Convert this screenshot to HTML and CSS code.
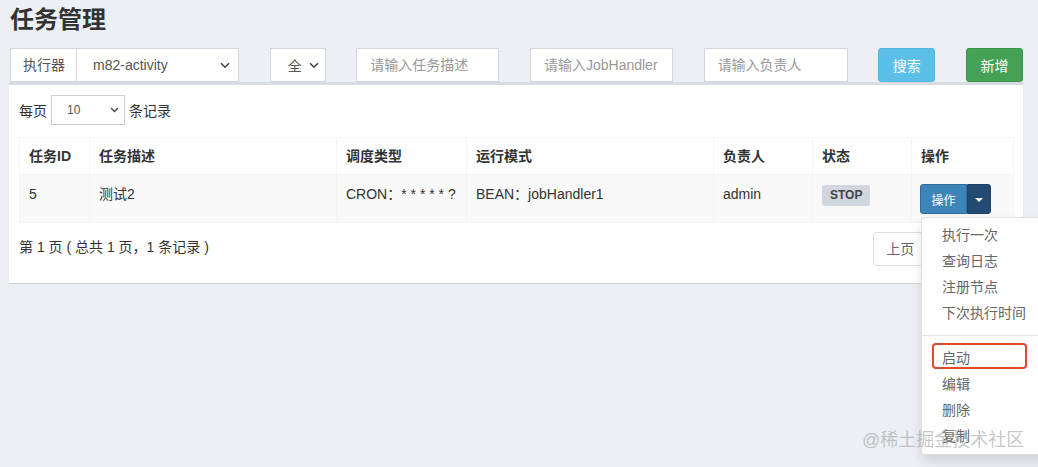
FILE: index.html
```html
<!DOCTYPE html>
<html lang="zh-CN">
<head>
  <meta charset="UTF-8">
  <meta name="viewport" content="width=device-width, initial-scale=1">
  <title>任务管理</title>
  <link rel="stylesheet" href="styles.css">
</head>
<body>
  <div class="content">
    <h1 class="page-title">任务管理</h1>

    <div class="filters">
      <div class="input-group">
        <span class="addon">执行器</span>
        <div class="fake-select sel-group">
          <span>m82-activity</span>
          <svg class="chev" width="10" height="7" viewBox="0 0 10 7"><path d="M1 1.2 L5 5.2 L9 1.2" fill="none" stroke="#444" stroke-width="1.6"/></svg>
        </div>
      </div>
      <div class="fake-select sel-status">
        <span>全</span>
        <svg class="chev" width="10" height="7" viewBox="0 0 10 7"><path d="M1 1.2 L5 5.2 L9 1.2" fill="none" stroke="#444" stroke-width="1.6"/></svg>
      </div>
      <input class="text-input" type="text" placeholder="请输入任务描述">
      <input class="text-input" type="text" placeholder="请输入JobHandler">
      <input class="text-input wide" type="text" placeholder="请输入负责人">
      <button class="btn btn-info">搜索</button>
      <button class="btn btn-success">新增</button>
    </div>

    <div class="box">
      <div class="length-row">
        <span>每页</span>
        <div class="fake-select sel-len">
          <span>10</span>
          <svg class="chev" width="9" height="6" viewBox="0 0 10 7"><path d="M1 1.2 L5 5.2 L9 1.2" fill="none" stroke="#444" stroke-width="1.6"/></svg>
        </div>
        <span>条记录</span>
      </div>

      <table class="job-table">
        <thead>
          <tr>
            <th class="col-id">任务ID</th>
            <th class="col-desc">任务描述</th>
            <th class="col-type">调度类型</th>
            <th class="col-mode">运行模式</th>
            <th class="col-owner">负责人</th>
            <th class="col-status">状态</th>
            <th class="col-op">操作</th>
          </tr>
        </thead>
        <tbody>
          <tr>
            <td>5</td>
            <td>测试2</td>
            <td>CRON：* * * * * ?</td>
            <td>BEAN：jobHandler1</td>
            <td>admin</td>
            <td><span class="label">STOP</span></td>
            <td>
              <div class="btn-group">
                <button class="btn-op">操作</button><button class="btn-caret"><span class="caret"></span></button>
                <ul class="dropdown-menu">
                  <li><a>执行一次</a></li>
                  <li><a>查询日志</a></li>
                  <li><a>注册节点</a></li>
                  <li><a>下次执行时间</a></li>
                  <li class="divider"></li>
                  <li class="marked"><a>启动</a><span class="mark"></span></li>
                  <li><a>编辑</a></li>
                  <li><a>删除</a></li>
                  <li><a>复制</a></li>
                </ul>
              </div>
            </td>
          </tr>
        </tbody>
      </table>

      <div class="footer-row">
        <div class="info">第 1 页 ( 总共 1 页，1 条记录 )</div>
        <ul class="pagination">
          <li><a>上页</a></li>
          <li><a>1</a></li>
          <li><a>下页</a></li>
        </ul>
      </div>
    </div>
  </div>

  <div class="watermark">@稀土掘金技术社区</div>
</body>
</html>
```

FILE: styles.css
```css
html, body {
  margin: 0;
  height: 100%;
  overflow: hidden;
}
body {
  background-color: #ecf0f5;
  font-family: "Liberation Sans", "Noto Sans CJK SC", sans-serif;
  font-size: 14px;
  color: #333;
  position: relative;
}
.content {
  padding: 8px 15px 0 10px;
}
.page-title {
  margin: 0 0 16px;
  font-size: 24px;
  line-height: 24px;
  font-weight: bold;
  color: #333;
}

/* filter bar */
.filters {
  display: flex;
  justify-content: space-between;
  height: 34px;
}
.input-group {
  display: flex;
  width: 229px;
}
.addon {
  width: 66px;
  box-sizing: border-box;
  padding: 0 0 0 12px;
  line-height: 32px;
  white-space: nowrap;
  border: 1px solid #d2d6de;
  border-right: none;
  background-color: #fff;
  color: #555;
}
.fake-select {
  display: flex;
  align-items: center;
  justify-content: space-between;
  box-sizing: border-box;
  border: 1px solid #d2d6de;
  background-color: #fff;
  color: #555;
}
.sel-group {
  width: 163px;
  padding: 0 8px 0 16px;
}
.sel-status {
  width: 56px;
  padding: 0 6px 0 17px;
}
.sel-len {
  width: 74px;
  height: 30px;
  padding: 0 5px 0 15px;
  margin: 0 4px 0 4px;
  font-size: 12px;
  border-color: #ccc;
}
.text-input {
  width: 143px;
  height: 34px;
  box-sizing: border-box;
  padding: 0 13px;
  border: 1px solid #d2d6de;
  font-family: inherit;
  font-size: 14px;
  color: #555;
  outline: none;
}
.text-input.wide {
  width: 144px;
}
.text-input::placeholder {
  color: #999;
}
.btn {
  width: 57px;
  height: 34px;
  border: 1px solid transparent;
  border-radius: 3px;
  color: #fff;
  font-family: inherit;
  font-size: 14px;
  cursor: pointer;
}
.btn-info {
  background-color: #5bbfe8;
  border-color: #52b6df;
}
.btn-success {
  background-color: #44a155;
  border-color: #3b944c;
}

/* box */
.box {
  background-color: #fff;
  border-top: 3px solid #d9dde3;
  box-shadow: 0 1px 1px rgba(0, 0, 0, 0.1);
  padding: 10px 10px 17px 10px;
  margin-left: -1px;
}
.length-row {
  display: flex;
  align-items: center;
  height: 30px;
  margin-bottom: 12px;
}

/* table */
.job-table {
  width: 100%;
  table-layout: fixed;
  border-collapse: collapse;
  border: 1px solid #f4f4f4;
}
.job-table th,
.job-table td {
  box-sizing: border-box;
  border: 1px solid #f4f4f4;
  text-align: left;
  line-height: 20px;
}
.job-table th {
  padding: 8px 9px;
  font-weight: bold;
}
.job-table td {
  padding: 9px 9px 8px;
  vertical-align: top;
}
.job-table tbody tr {
  background-color: #f9f9f9;
}
.col-id { width: 70px; }
.col-desc { width: 247px; }
.col-type { width: 130px; }
.col-mode { width: 247px; }
.col-owner { width: 99px; }
.col-status { width: 99px; }
.col-op { width: 102px; }

.label {
  display: inline-block;
  padding: 0 8px;
  line-height: 21px;
  border-radius: 3px;
  background-color: #d2d6de;
  color: #444;
  font-size: 12px;
  font-weight: bold;
}

.btn-group {
  position: relative;
  display: flex;
  margin-left: -1px;
}
.btn-op,
.btn-caret {
  height: 30px;
  border: 1px solid #2f6e9c;
  color: #fff;
  font-family: inherit;
  font-size: 12px;
  padding: 0;
}
.btn-op {
  width: 47px;
  background-color: #3d84b9;
  border-radius: 3px 0 0 3px;
}
.btn-caret {
  width: 24px;
  background-color: #234a71;
  border-color: #1f4266;
  border-radius: 0 3px 3px 0;
}
.caret {
  display: inline-block;
  border-top: 4px solid #fff;
  border-left: 4px solid transparent;
  border-right: 4px solid transparent;
  vertical-align: middle;
}

/* dropdown */
.dropdown-menu {
  position: absolute;
  top: 33px;
  left: 1px;
  z-index: 10;
  min-width: 160px;
  margin: 0;
  padding: 4px 0 5px;
  list-style: none;
  background-color: #fff;
  border: 1px solid rgba(0, 0, 0, 0.12);
  border-radius: 4px;
  box-shadow: 0 6px 12px rgba(0, 0, 0, 0.12);
}
.dropdown-menu li {
  position: relative;
}
.dropdown-menu a {
  display: block;
  padding: 3px 20px;
  line-height: 20px;
  color: #666;
  white-space: nowrap;
}
.dropdown-menu .divider {
  height: 1px;
  margin: 9px 0;
  background-color: #e5e5e5;
}
.mark {
  position: absolute;
  left: 10px;
  top: -2px;
  width: 95px;
  height: 26px;
  box-sizing: border-box;
  border: 2px solid #e5482c;
  border-radius: 4px;
}

/* footer */
.footer-row {
  display: flex;
  justify-content: space-between;
  align-items: center;
  margin-top: 9px;
  height: 34px;
}
.info {
  line-height: 30px;
  margin-top: -4px;
}
.pagination {
  display: flex;
  margin: 0;
  padding: 0;
  list-style: none;
}
.pagination a {
  display: block;
  padding: 6px 12px;
  line-height: 20px;
  border: 1px solid #ddd;
  margin-left: -1px;
  color: #666;
}
.pagination li:first-child a {
  border-radius: 4px 0 0 4px;
}
.pagination li:last-child a {
  border-radius: 0 4px 4px 0;
}

.watermark {
  position: absolute;
  left: 862px;
  top: 428px;
  font-size: 18px;
  line-height: 24px;
  color: rgba(150, 150, 150, 0.55);
  z-index: 20;
  white-space: nowrap;
}
```
